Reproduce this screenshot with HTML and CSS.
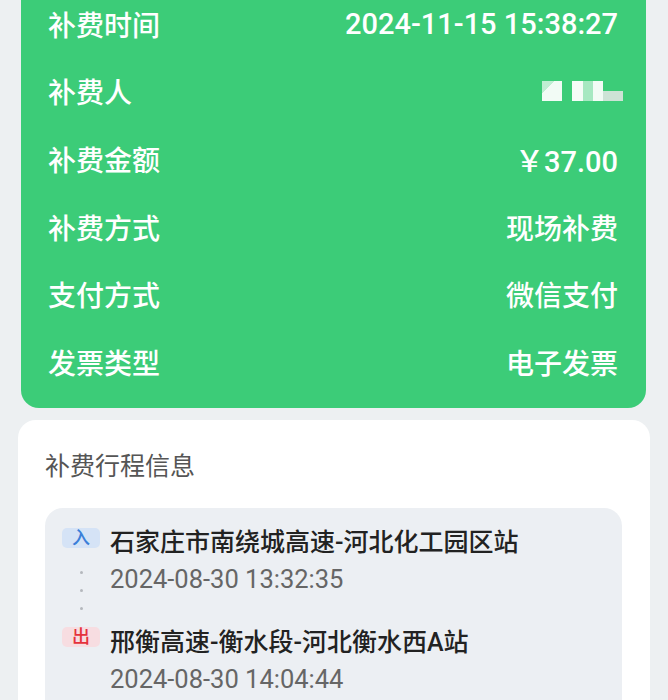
FILE: index.html
```html
<!DOCTYPE html>
<html lang="zh-CN">
<head>
    <meta charset="UTF-8">
    <meta name="viewport" content="width=device-width, initial-scale=1.0">
    <title>补费详情</title>
    <link rel="stylesheet" href="styles.css">
</head>
<body>

    <div class="pay-card">
        <div class="pay-row">
            <span class="pay-label">补费时间</span>
            <span class="pay-value num">2024-11-15 15:38:27</span>
        </div>
        <div class="pay-row">
            <span class="pay-label">补费人</span>
            <span class="mosaic">
                <i class="m1"></i><i class="m2"></i><i class="m3"></i><i class="m4"></i><i class="m5"></i>
            </span>
        </div>
        <div class="pay-row">
            <span class="pay-label">补费金额</span>
            <span class="pay-value num">￥37.00</span>
        </div>
        <div class="pay-row">
            <span class="pay-label">补费方式</span>
            <span class="pay-value">现场补费</span>
        </div>
        <div class="pay-row">
            <span class="pay-label">支付方式</span>
            <span class="pay-value">微信支付</span>
        </div>
        <div class="pay-row">
            <span class="pay-label">发票类型</span>
            <span class="pay-value">电子发票</span>
        </div>
    </div>

    <div class="trip-card">
        <h2 class="trip-title">补费行程信息</h2>
        <div class="trip-box">
            <div class="trip-marks">
                <span class="badge badge-in">入</span>
                <div class="dots">
                    <i></i><i></i><i></i>
                </div>
                <span class="badge badge-out">出</span>
            </div>
            <div class="trip-info">
                <div class="station">石家庄市南绕城高速-河北化工园区站</div>
                <div class="station-time">2024-08-30 13:32:35</div>
                <div class="station second">邢衡高速-衡水段-河北衡水西A站</div>
                <div class="station-time">2024-08-30 14:04:44</div>
            </div>
        </div>
    </div>

</body>
</html>
```

FILE: styles.css
```css
body {
    margin: 0;
    background-color: #edf0f2;
    font-family: Roboto, "Noto Sans CJK SC", sans-serif;
    overflow: hidden;
}
.pay-card {
    margin: -10px 22px 0 21px;
    padding: 0 28px 12px 27px;
    background-color: #3ccc78;
    border-radius: 0 0 18px 18px;
    color: #fff;
}
.pay-row {
    display: flex;
    justify-content: space-between;
    align-items: center;
    height: 67.6px;
}
.pay-label,
.pay-value {
    font-size: 28px;
    font-weight: 500;
}
.pay-value.num {
    font-size: 29px;
}
.mosaic {
    display: flex;
    align-items: flex-end;
    height: 20px;
    margin-right: -5px;
}
.mosaic i {
    display: block;
    height: 20px;
}
.mosaic .m1 {
    width: 20px;
    background: linear-gradient(135deg, #bfeed2 30%, #f2fbf5 31%);
    margin-right: 10px;
}
.mosaic .m2 {
    width: 11px;
    background-color: #f4fcf7;
}
.mosaic .m3 {
    width: 10px;
    background-color: #a6e8c1;
}
.mosaic .m4 {
    width: 10px;
    background-color: #f2fbf5;
}
.mosaic .m5 {
    width: 20px;
    height: 10px;
    background-color: #cde3d6;
}
.trip-card {
    margin: 12px 18px 0 18px;
    padding: 29px 28px 0 27px;
    background-color: #fff;
    border-radius: 18px 18px 0 0;
    height: 400px;
}
.trip-title {
    margin: 0 0 23px 0;
    font-size: 25px;
    font-weight: 400;
    line-height: 36px;
    color: #555;
}
.trip-box {
    display: flex;
    padding: 17px 0 0 17px;
    background-color: #eceff3;
    border-radius: 18px;
    height: 300px;
}
.trip-marks {
    display: flex;
    flex-direction: column;
    align-items: center;
    width: 38px;
    padding-top: 3px;
    margin-right: 10px;
}
.badge {
    display: block;
    width: 38px;
    height: 20px;
    line-height: 20px;
    text-align: center;
    font-size: 18px;
    font-weight: 500;
    border-radius: 5px;
}
.badge-in {
    background-color: #d5e3f6;
    color: #3b7fd9;
}
.badge-out {
    background-color: #f7dde1;
    color: #e5323c;
}
.dots {
    display: flex;
    flex-direction: column;
    align-items: center;
    gap: 15px;
    height: 79px;
    box-sizing: border-box;
    padding-top: 23px;
}
.dots i {
    display: block;
    width: 3px;
    height: 3px;
    border-radius: 50%;
    background-color: #b5b8bd;
}
.station {
    font-size: 25px;
    font-weight: 500;
    line-height: 36px;
    color: #222;
}
.station.second {
    margin-top: 27px;
}
.station-time {
    font-size: 25.5px;
    line-height: 37px;
    color: #666;
}
```
